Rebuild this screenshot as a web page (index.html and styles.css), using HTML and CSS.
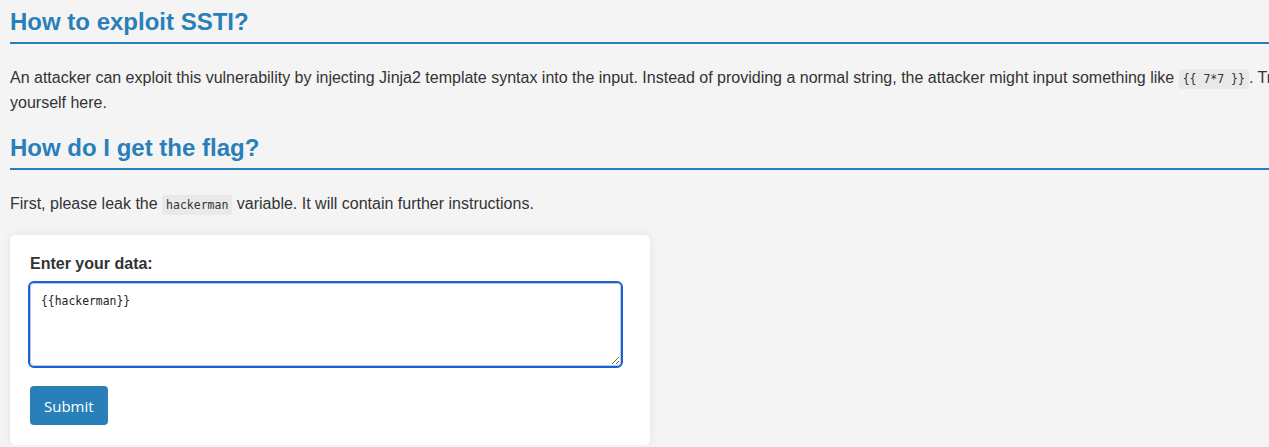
FILE: index.html
```html
<!DOCTYPE html>
<html lang="en">
<head>
<meta charset="utf-8">
<title>SSTI</title>
<link rel="stylesheet" href="styles.css">
</head>
<body>
<main class="page">
  <h2 class="section-title">How to exploit SSTI?</h2>
  <p class="text">An attacker can exploit this vulnerability by injecting Jinja2 template syntax into the input. Instead of providing a normal string, the attacker might input something like <code class="code">{{ 7*7 }}</code>. Try it yourself here.</p>
  <h2 class="section-title">How do I get the flag?</h2>
  <p class="text">First, please leak the <code class="code">hackerman</code> variable. It will contain further instructions.</p>
  <form class="card">
    <label class="label" for="data">Enter your data:</label>
    <textarea class="input" id="data" name="data">{{hackerman}}</textarea>
    <button class="btn" type="button">Submit</button>
  </form>
</main>
</body>
</html>
```

FILE: styles.css
```css
html {
  overflow: hidden;
}

body {
  margin: 0;
  background: #f4f4f4;
  color: #333;
  font-family: "Liberation Sans", Arial, sans-serif;
  font-size: 16px;
}

.page {
  width: 1310px;
  padding: 8px 10px 0;
}

.section-title {
  margin: 19px 0 22px;
  padding-bottom: 6px;
  border-bottom: 2px solid #2980b9;
  color: #2980b9;
  font-size: 24px;
  font-weight: bold;
  line-height: normal;
}

.section-title:first-child {
  margin-top: 0;
}

.text {
  margin: 0 0 18px;
  line-height: 24px;
}

.code {
  padding: 3px 4px;
  border-radius: 3px;
  background: #e9e9e9;
  font-family: "DejaVu Sans Mono", Consolas, monospace;
  font-size: 11.5px;
}

.card {
  width: 600px;
  padding: 20px;
  background: #fff;
  border-radius: 5px;
  box-shadow: 0 0 8px rgba(0, 0, 0, 0.08);
}

.label {
  display: block;
  margin-bottom: 10px;
  font-weight: bold;
  font-size: 16px;
}

.input {
  display: block;
  box-sizing: border-box;
  width: 591px;
  height: 83px;
  margin: 0 0 20px;
  padding: 10px;
  border: 1px solid #c8c8c8;
  border-radius: 4px;
  outline: 2px solid #1463db;
  outline-offset: 0;
  background: #fff;
  color: #222;
  font-family: "DejaVu Sans Mono", Consolas, monospace;
  font-size: 11.4px;
  line-height: 14px;
}

.btn {
  display: block;
  height: 39px;
  padding: 0 14px;
  border: 0;
  border-radius: 4px;
  background: #2980b9;
  color: #fff;
  font-family: "Open Sans", "Segoe UI", sans-serif;
  font-size: 15px;
}
```
